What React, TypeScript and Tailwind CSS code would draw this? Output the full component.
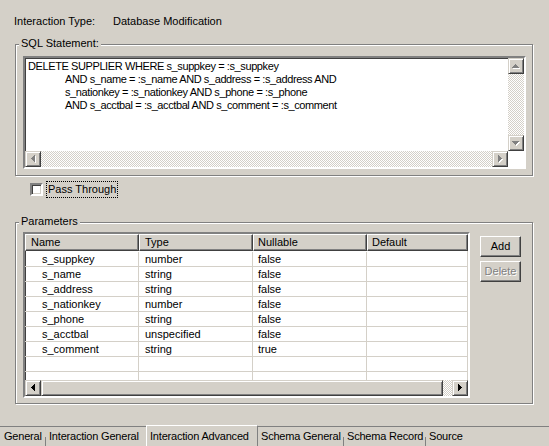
import React from 'react';

type Dir = 'up' | 'down' | 'left' | 'right';

const rows = [
  ['s_suppkey', 'number', 'false'],
  ['s_name', 'string', 'false'],
  ['s_address', 'string', 'false'],
  ['s_nationkey', 'number', 'false'],
  ['s_phone', 'string', 'false'],
  ['s_acctbal', 'unspecified', 'false'],
  ['s_comment', 'string', 'true'],
  ['', '', ''],
  ['', '', ''],
];

const tabs = [
  { label: 'General', w: 'w-[45px]', pl: 'pl-[4px]', sep: true },
  { label: 'Interaction General', w: 'w-[100px]', pl: 'pl-[3px]', sep: false },
  { label: 'Interaction Advanced', w: 'w-[112px]', pl: 'pl-[3px]', sep: false, active: true },
  { label: 'Schema General', w: 'w-[85px]', pl: 'pl-[3px]', sep: true },
  { label: 'Schema Record', w: 'w-[81px]', pl: 'pl-[3px]', sep: true },
  { label: 'Source', w: 'w-[60px]', pl: 'pl-[3px]', sep: false },
];

// pixel arrow like the classic windows scrollbar glyph
function Arrow({ dir, disabled }: { dir: Dir; disabled?: boolean }) {
  const vertical = dir === 'up' || dir === 'down';
  const w = vertical ? 7 : 4;
  const h = vertical ? 4 : 7;
  const rects = [0, 1, 2, 3].map((i) => {
    if (dir === 'up') return { x: 3 - i, y: i, w: 2 * i + 1, h: 1 };
    if (dir === 'down') return { x: i, y: i, w: 7 - 2 * i, h: 1 };
    if (dir === 'left') return { x: i, y: 3 - i, w: 1, h: 2 * i + 1 };
    return { x: i, y: i, w: 1, h: 7 - 2 * i };
  });
  return (
    <svg width={w + 1} height={h + 1} viewBox={`0 0 ${w + 1} ${h + 1}`} shapeRendering="crispEdges">
      {disabled &&
        rects.map((r, i) => (
          <rect key={'s' + i} x={r.x + 1} y={r.y + 1} width={r.w} height={r.h} fill="#ffffff" />
        ))}
      {rects.map((r, i) => (
        <rect key={i} x={r.x} y={r.y} width={r.w} height={r.h} fill={disabled ? '#808080' : '#000000'} />
      ))}
    </svg>
  );
}

function ScrollButton({ dir, disabled }: { dir: Dir; disabled?: boolean }) {
  return (
    <div className="w-4 h-4 shrink-0 flex items-center justify-center bg-[#d4d0c8] border border-t-[#d4d0c8] border-l-[#d4d0c8] border-r-[#404040] border-b-[#404040] shadow-[inset_1px_1px_0_#ffffff,inset_-1px_-1px_0_#808080]">
      <Arrow dir={dir} disabled={disabled} />
    </div>
  );
}

const track = 'bg-[image:repeating-conic-gradient(#ffffff_0_25%,#d4d0c8_0_50%)] bg-[length:2px_2px]';
const sunken =
  'border-2 border-t-[#808080] border-l-[#808080] border-r-white border-b-white shadow-[inset_1px_1px_0_#404040,inset_-1px_-1px_0_#d4d0c8]';

function GroupBox({ title, className, children }: { title: string; className: string; children: React.ReactNode }) {
  return (
    <div className={`relative ml-[15px] w-[518px] border border-[#808080] shadow-[inset_1px_1px_0_#ffffff,1px_1px_0_#ffffff] ${className}`}>
      <span className="absolute left-[3px] -top-[8px] px-[2px] bg-[#d4d0c8] leading-[13px]">{title}</span>
      {children}
    </div>
  );
}

function PushButton({ label, disabled }: { label: string; disabled?: boolean }) {
  return (
    <div className="w-[41px] h-[21px] flex items-center justify-center bg-[#d4d0c8] border border-t-white border-l-white border-r-[#404040] border-b-[#404040] shadow-[inset_-1px_-1px_0_#808080]">
      <span className={disabled ? 'text-[#808080] [text-shadow:1px_1px_0_#ffffff]' : 'text-black'}>{label}</span>
    </div>
  );
}

export default function App() {
  return (
    <div className="w-[549px] h-[446px] bg-[#d4d0c8] flex flex-col text-[11px] leading-[13px] text-black font-['Liberation_Sans',Arial,sans-serif] overflow-hidden">
      <div className="flex pl-[14px] pt-[15px]">
        <span className="w-[99px]">Interaction Type:</span>
        <span>Database Modification</span>
      </div>

      <GroupBox title="SQL Statement:" className="mt-[16px] h-[132px]">
        <div className={`ml-[7px] mt-[11px] w-[503px] h-[113px] bg-white ${sunken} grid grid-cols-[1fr_16px] grid-rows-[1fr_16px]`}>
          <div className="pl-[3px] pt-[2px] whitespace-nowrap overflow-hidden tracking-[-0.4px]">
            <div>DELETE SUPPLIER WHERE s_suppkey = :s_suppkey</div>
            <div className="pl-[37px]">AND s_name = :s_name AND s_address = :s_address AND</div>
            <div className="pl-[37px]">s_nationkey = :s_nationkey AND s_phone = :s_phone</div>
            <div className="pl-[37px]">AND s_acctbal = :s_acctbal AND s_comment = :s_comment</div>
          </div>
          <div className="flex flex-col">
            <ScrollButton dir="up" disabled />
            <div className={`flex-1 ${track}`} />
            <ScrollButton dir="down" disabled />
          </div>
          <div className="flex">
            <ScrollButton dir="left" disabled />
            <div className={`flex-1 ${track}`} />
            <ScrollButton dir="right" disabled />
          </div>
          <div className="bg-white" />
        </div>
      </GroupBox>

      <div className="flex items-center h-[17px] mt-[5px] ml-[30px]">
        <div className={`w-[13px] h-[13px] shrink-0 bg-white ${sunken}`} />
        <span className="ml-[3px] h-[17px] leading-[15px] px-[1px] whitespace-nowrap border border-dotted border-black">Pass Through</span>
      </div>

      <GroupBox title="Parameters" className="mt-[24px] h-[182px]">
        <div className="flex">
          <div className={`ml-[7px] mt-[9px] w-[447px] h-[166px] bg-white ${sunken} flex flex-col`}>
            <div className="flex h-[17px] shrink-0 bg-[#d4d0c8]">
              {[
                ['Name', 'w-[114px]', 'pl-[5px]'],
                ['Type', 'w-[114px]', 'pl-[5px]'],
                ['Nullable', 'w-[114px]', 'pl-[4px]'],
                ['Default', 'w-[101px]', 'pl-[4px]'],
              ].map(([label, w, pl]) => (
                <div
                  key={label}
                  className={`${w} ${pl} h-[17px] leading-[14px] border border-t-white border-l-white border-r-[#404040] border-b-[#404040] shadow-[inset_-1px_-1px_0_#808080]`}
                >
                  {label}
                </div>
              ))}
            </div>
            <div className="flex-1 pt-[1px] overflow-hidden">
              {rows.map(([name, type, nullable], i) => (
                <div key={i} className="flex h-[15px] shrink-0 border-b border-[#d4d0c8] leading-[14px]">
                  <div className="w-[114px] pl-[17px] border-r border-[#d4d0c8]">{name}</div>
                  <div className="w-[114px] pl-[6px] border-r border-[#d4d0c8]">{type}</div>
                  <div className="w-[114px] pl-[5px] border-r border-[#d4d0c8]">{nullable}</div>
                  <div className="w-[101px]" />
                </div>
              ))}
            </div>
            <div className="flex h-4 shrink-0">
              <ScrollButton dir="left" />
              <div className="w-[402px] h-4 bg-[#d4d0c8] border border-t-[#d4d0c8] border-l-[#d4d0c8] border-r-[#404040] border-b-[#404040] shadow-[inset_1px_1px_0_#ffffff,inset_-1px_-1px_0_#808080]" />
              <div className={`flex-1 ${track}`} />
              <ScrollButton dir="right" />
            </div>
          </div>
          <div className="ml-[10px] mt-[13px] flex flex-col gap-[4px]">
            <PushButton label="Add" />
            <PushButton label="Delete" disabled />
          </div>
        </div>
      </GroupBox>

      <div className="mt-auto h-[20px] flex border-t border-[#808080] tracking-[-0.2px]">
        {tabs.map((t) => (
          <React.Fragment key={t.label}>
            {t.active ? (
              <div className={`${t.w} ${t.pl} -mt-[2px] h-[21px] pt-[1px] leading-[19px] shrink-0 bg-[#d4d0c8] border-t border-l border-r border-t-white border-l-white border-r-[#808080] whitespace-nowrap`}>
                {t.label}
              </div>
            ) : (
              <div className={`${t.w} ${t.pl} h-[19px] leading-[19px] whitespace-nowrap shrink-0`}>{t.label}</div>
            )}
            {t.sep && <div className="w-px h-[9px] self-end bg-[#808080] shrink-0" />}
          </React.Fragment>
        ))}
      </div>
    </div>
  );
}
